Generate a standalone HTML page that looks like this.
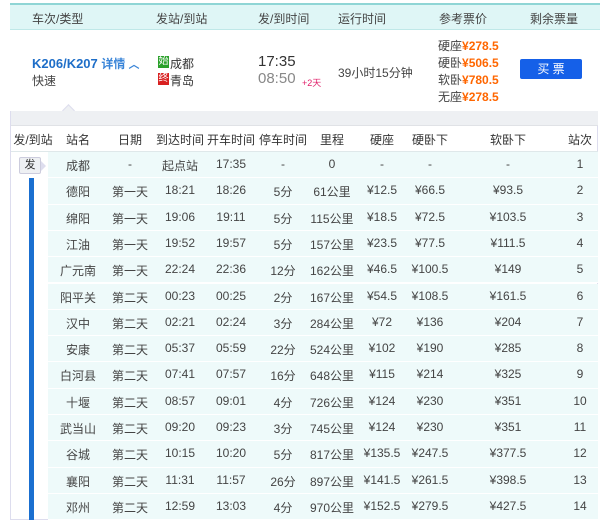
<!DOCTYPE html>
<html><head><meta charset="utf-8"><style>
*{margin:0;padding:0;box-sizing:border-box}
body{width:600px;height:520px;background:#fff;font-family:"Liberation Sans","Noto Sans CJK SC",sans-serif;font-size:12px;color:#333;position:relative;overflow:hidden}
.a{position:absolute;white-space:nowrap}
.c{position:absolute;text-align:center;transform:translateX(-50%);white-space:nowrap}
.row{position:absolute;left:48px;width:550px;height:26px;background:#eefafa;border-bottom:1px solid #fff}
.o{color:#f60;font-weight:bold}
</style></head><body>
<div class="a" style="left:10px;top:3px;width:590px;height:27px;background:#dff6f6;border-top:2px solid #8fd5d5;border-bottom:1px solid #bfe8e8"></div>
<div class="a" style="left:32px;top:10px;color:#444">车次/类型</div>
<div class="a" style="left:156px;top:10px;color:#444">发站/到站</div>
<div class="a" style="left:258px;top:10px;color:#444">发/到时间</div>
<div class="a" style="left:338px;top:10px;color:#444">运行时间</div>
<div class="a" style="left:439px;top:10px;color:#444">参考票价</div>
<div class="a" style="left:530px;top:10px;color:#444">剩余票量</div>

<div class="a" style="left:32px;top:55px;color:#1e6ec8;font-weight:bold;font-size:13px">K206/K207 <span style="font-size:12px;color:#3a85d8">详情</span><span style="color:#3a85d8;font-size:11px"> ︿</span></div>
<div class="a" style="left:32px;top:72px;color:#444">快速</div>
<div class="a" style="left:158px;top:56px;width:11px;height:12px;background:#2aa02a;color:#fff;font-size:10px;line-height:12px;text-align:center">始</div>
<div class="a" style="left:170px;top:55px">成都</div>
<div class="a" style="left:158px;top:73px;width:11px;height:12px;background:#d82020;color:#fff;font-size:10px;line-height:12px;text-align:center">终</div>
<div class="a" style="left:170px;top:72px">青岛</div>
<div class="a" style="left:258px;top:53px;font-size:15px;color:#333">17:35</div>
<div class="a" style="left:258px;top:70px;font-size:15px;color:#888">08:50</div>
<div class="a" style="left:302px;top:76px;font-size:9px;color:#e0206a">+2天</div>
<div class="a" style="left:338px;top:64px;color:#444">39小时15分钟</div>
<div class="a" style="left:438px;top:38px;line-height:17px;color:#444">硬座<span class="o">¥278.5</span><br>硬卧<span class="o">¥506.5</span><br>软卧<span class="o">¥780.5</span><br>无座<span class="o">¥278.5</span></div>
<div class="a" style="left:520px;top:59px;width:62px;height:20px;background:#1560e8;border-radius:2px;color:#fff;text-align:center;line-height:20px">买 票</div>

<div class="a" style="left:10px;top:111px;width:588px;height:409px;border:1px solid #dde;border-top:none;background:#fff"></div>
<div class="a" style="left:11px;top:111px;width:587px;height:15px;background:#eef0f3;border-bottom:1px solid #e0e2e6"></div>
<div class="a" style="left:64px;top:106px;width:9px;height:9px;background:#eef0f3;border-left:1px solid #dde;border-top:1px solid #dde;transform:rotate(45deg)"></div>
<div class="a" style="left:11px;top:127px;width:587px;height:25px;border-bottom:1px solid #dfe8ea"></div>
<div class="c" style="left:33px;top:131px">发/到站</div>
<div class="c" style="left:78px;top:131px">站名</div>
<div class="c" style="left:130px;top:131px">日期</div>
<div class="c" style="left:180px;top:131px">到达时间</div>
<div class="c" style="left:231px;top:131px">开车时间</div>
<div class="c" style="left:283px;top:131px">停车时间</div>
<div class="c" style="left:332px;top:131px">里程</div>
<div class="c" style="left:382px;top:131px">硬座</div>
<div class="c" style="left:430px;top:131px">硬卧下</div>
<div class="c" style="left:508px;top:131px">软卧下</div>
<div class="c" style="left:580px;top:131px">站次</div>

<div class="a" style="left:29px;top:178px;width:5px;height:342px;background:#1a6fd0"></div>
<div class="a" style="left:19px;top:157px;width:22px;height:17px;background:#eef0f3;border:1px solid #ccd;border-radius:2px;font-size:11px;line-height:15px;text-align:center">发</div>
<div class="a" style="left:41px;top:161px;width:0;height:0;border-top:5px solid transparent;border-bottom:5px solid transparent;border-left:5px solid #dde"></div>

<div id="rows"></div>
<script>
var d=[["成都","-","起点站","17:35","-","0","-","-","-","1"],
["德阳","第一天","18:21","18:26","5分","61公里","¥12.5","¥66.5","¥93.5","2"],
["绵阳","第一天","19:06","19:11","5分","115公里","¥18.5","¥72.5","¥103.5","3"],
["江油","第一天","19:52","19:57","5分","157公里","¥23.5","¥77.5","¥111.5","4"],
["广元南","第一天","22:24","22:36","12分","162公里","¥46.5","¥100.5","¥149","5"],
["阳平关","第二天","00:23","00:25","2分","167公里","¥54.5","¥108.5","¥161.5","6"],
["汉中","第二天","02:21","02:24","3分","284公里","¥72","¥136","¥204","7"],
["安康","第二天","05:37","05:59","22分","524公里","¥102","¥190","¥285","8"],
["白河县","第二天","07:41","07:57","16分","648公里","¥115","¥214","¥325","9"],
["十堰","第二天","08:57","09:01","4分","726公里","¥124","¥230","¥351","10"],
["武当山","第二天","09:20","09:23","3分","745公里","¥124","¥230","¥351","11"],
["谷城","第二天","10:15","10:20","5分","817公里","¥135.5","¥247.5","¥377.5","12"],
["襄阳","第二天","11:31","11:57","26分","897公里","¥141.5","¥261.5","¥398.5","13"],
["邓州","第二天","12:59","13:03","4分","970公里","¥152.5","¥279.5","¥427.5","14"]];
var xs=[78,130,180,231,283,332,382,430,508,580],h="";
d.forEach(function(r,i){var t=152+i*26.3;h+='<div class="row" style="top:'+t+'px;height:26.3px"></div>';
r.forEach(function(v,j){h+='<div class="c" style="left:'+xs[j]+'px;top:'+(t+5)+'px;color:#444">'+v+'</div>'})});
document.getElementById('rows').innerHTML=h;
</script>
</body></html>
